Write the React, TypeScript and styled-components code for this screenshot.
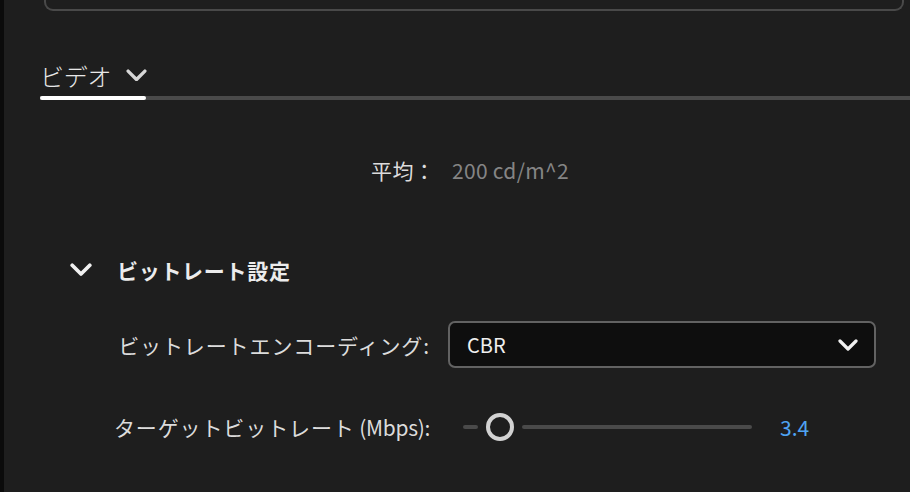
import React from "react";
import styled, { createGlobalStyle } from "styled-components";

const Global = createGlobalStyle`
  html, body { margin: 0; padding: 0; background: #1e1e1e; }
  body { font-family: "Noto Sans CJK JP", "Noto Sans", sans-serif; color: #e6e6e6; }
  #root { width: 910px; height: 492px; overflow: hidden; }
`;

const Shell = styled.div`
  display: flex;
  width: 910px;
  height: 492px;
  background: #1e1e1e;
`;

const EdgeStrip = styled.div`
  width: 4px;
  flex: none;
  background: #0b0b0b;
`;

const Main = styled.div`
  flex: 1;
  display: flex;
  flex-direction: column;
  min-width: 0;
`;

const TopCard = styled.div`
  margin: 0 6px 0 40px;
  height: 9px;
  border: 2px solid #494949;
  border-top: none;
  border-radius: 0 0 9px 9px;
`;

const TabBar = styled.div`
  margin-top: 49px;
  display: flex;
  flex-direction: column;
  gap: 6px;
`;

const TabLabel = styled.div`
  margin-left: 36px;
  height: 30px;
  display: flex;
  align-items: center;
  gap: 15px;
  font-size: 24px;
  font-weight: 300;
  color: #e8e8e8;
  letter-spacing: -0.3px;
`;

const TabTrack = styled.div`
  margin-left: 36px;
  height: 4px;
  background: #4a4a4a;
  display: flex;
`;

const TabIndicator = styled.div`
  width: 106px;
  height: 4px;
  border-radius: 2px;
  background: #ffffff;
`;

const Form = styled.div`
  display: flex;
  flex-direction: column;
`;

const Row = styled.div<{ $top: number; $h: number }>`
  margin-top: ${(p) => p.$top}px;
  height: ${(p) => p.$h}px;
  display: grid;
  grid-template-columns: 426px auto;
  column-gap: 18px;
  align-items: center;
`;

const Label = styled.div`
  text-align: right;
  font-size: 21px;
  color: #dcdcdc;
  white-space: nowrap;
  letter-spacing: 0.9px;
`;

const Unit = styled.span`
  letter-spacing: -0.3px;
`;

const AvgLabel = styled(Label)`
  margin-right: -5px;
  letter-spacing: 0.3px;
`;

const Value = styled.div`
  padding-left: 4px;
  font-size: 21px;
  color: #858585;
  letter-spacing: 0.3px;
`;

const SectionHeader = styled.div`
  margin-top: 70px;
  height: 30px;
  display: flex;
  align-items: center;
  padding-left: 66px;
  gap: 25px;
  font-size: 21px;
  font-weight: 700;
  color: #ececec;
  letter-spacing: 0.7px;
`;

const Select = styled.div`
  width: 428px;
  height: 47px;
  box-sizing: border-box;
  border: 2px solid #626262;
  border-radius: 7px;
  background: #0e0e0e;
  display: flex;
  align-items: center;
  justify-content: space-between;
  padding: 0 16px 0 17px;
  font-size: 20px;
  color: #f0f0f0;
`;

const SliderWrap = styled.div`
  display: flex;
  align-items: center;
  margin-left: 15px;
`;

const Track = styled.div<{ $w: number }>`
  width: ${(p) => p.$w}px;
  height: 4px;
  border-radius: 2px;
  background: #4a4a4a;
`;

const Thumb = styled.div`
  width: 28px;
  height: 28px;
  box-sizing: border-box;
  border: 4px solid #d2d2d2;
  border-radius: 50%;
  margin: 0 8px;
`;

const SliderValue = styled.div`
  margin-left: 28px;
  font-size: 21px;
  color: #4fa3f2;
`;

const Chevron = ({ size, color, stroke }: { size: number; color: string; stroke: number }) => (
  <svg width={size} height={size * 0.6} viewBox="0 0 20 12" fill="none">
    <path d="M2 2 L10 10 L18 2" stroke={color} strokeWidth={stroke} strokeLinecap="round" strokeLinejoin="round" />
  </svg>
);

export default function App() {
  return (
    <>
      <Global />
      <Shell>
        <EdgeStrip />
        <Main>
          <TopCard />
          <TabBar>
            <TabLabel>
              ビデオ
              <Chevron size={21} color="#d6d6d6" stroke={3.2} />
            </TabLabel>
            <TabTrack>
              <TabIndicator />
            </TabTrack>
          </TabBar>
          <Form>
            <Row $top={55} $h={30}>
              <AvgLabel>平均：</AvgLabel>
              <Value>200 cd/m^2</Value>
            </Row>
            <SectionHeader>
              <Chevron size={22} color="#f0f0f0" stroke={3.4} />
              ビットレート設定
            </SectionHeader>
            <Row $top={36} $h={47}>
              <Label>ビットレートエンコーディング:</Label>
              <Select>
                CBR
                <Chevron size={20} color="#f0f0f0" stroke={3.2} />
              </Select>
            </Row>
            <Row $top={44} $h={30}>
              <Label>
                ターゲットビットレート<Unit> (Mbps):</Unit>
              </Label>
              <SliderWrap>
                <Track $w={15} />
                <Thumb />
                <Track $w={230} />
                <SliderValue>3.4</SliderValue>
              </SliderWrap>
            </Row>
          </Form>
        </Main>
      </Shell>
    </>
  );
}
